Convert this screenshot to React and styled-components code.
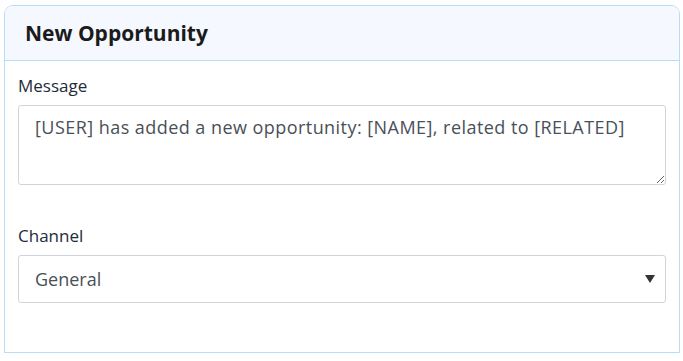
import React from 'react';
import styled, { createGlobalStyle } from 'styled-components';

const GlobalStyle = createGlobalStyle`
  body {
    margin: 0;
    background: #fff;
    font-family: "Open Sans", "Noto Sans", sans-serif;
  }
`;

const Page = styled.div`
  padding: 5px 3px 0 4px;
`;

const Card = styled.div`
  border: 1px solid #b8dcf7;
  border-radius: 9px 9px 0 0;
  height: 348px;
  box-sizing: border-box;
  overflow: hidden;
`;

const Header = styled.div`
  background: #f5f9ff;
  border-bottom: 1px solid #b8dcf7;
  height: 55px;
  box-sizing: border-box;
  display: flex;
  align-items: center;
  padding: 0 20px;
`;

const Title = styled.h2`
  margin: 0;
  font-size: 21px;
  font-weight: 700;
  color: #1b1b1b;
`;

const Body = styled.div`
  padding: 14px 13px 0 13px;
  display: flex;
  flex-direction: column;
  gap: 40px;
`;

const Group = styled.div`
  display: flex;
  flex-direction: column;
`;

const Label = styled.label`
  font-size: 17px;
  color: #1e2b3a;
  margin-bottom: 8px;
  line-height: 22px;
`;

const TextArea = styled.textarea`
  height: 80px;
  box-sizing: border-box;
  border: 1px solid #ced4da;
  border-radius: 3px;
  padding: 9px 16px;
  font-family: inherit;
  font-size: 18px;
  letter-spacing: 0.45px;
  line-height: 1.4;
  color: #495057;
  resize: vertical;
  outline: none;
`;

const SelectWrap = styled.div`
  position: relative;
`;

const Select = styled.select`
  width: 100%;
  height: 48px;
  box-sizing: border-box;
  appearance: none;
  border: 1px solid #ced4da;
  border-radius: 3px;
  padding: 0 16px;
  font-family: inherit;
  font-size: 18px;
  color: #495057;
  background: #fff;
  outline: none;
`;

const Arrow = styled.span`
  position: absolute;
  right: 11px;
  top: 50%;
  transform: translateY(-50%);
  width: 0;
  height: 0;
  border-left: 5px solid transparent;
  border-right: 5px solid transparent;
  border-top: 8px solid #333;
  pointer-events: none;
`;

export default function App() {
  return (
    <>
      <GlobalStyle />
      <Page>
        <Card>
          <Header>
            <Title>New Opportunity</Title>
          </Header>
          <Body>
            <Group>
              <Label>Message</Label>
              <TextArea defaultValue="[USER] has added a new opportunity: [NAME], related to [RELATED]" />
            </Group>
            <Group>
              <Label>Channel</Label>
              <SelectWrap>
                <Select defaultValue="general">
                  <option value="general">General</option>
                </Select>
                <Arrow />
              </SelectWrap>
            </Group>
          </Body>
        </Card>
      </Page>
    </>
  );
}
